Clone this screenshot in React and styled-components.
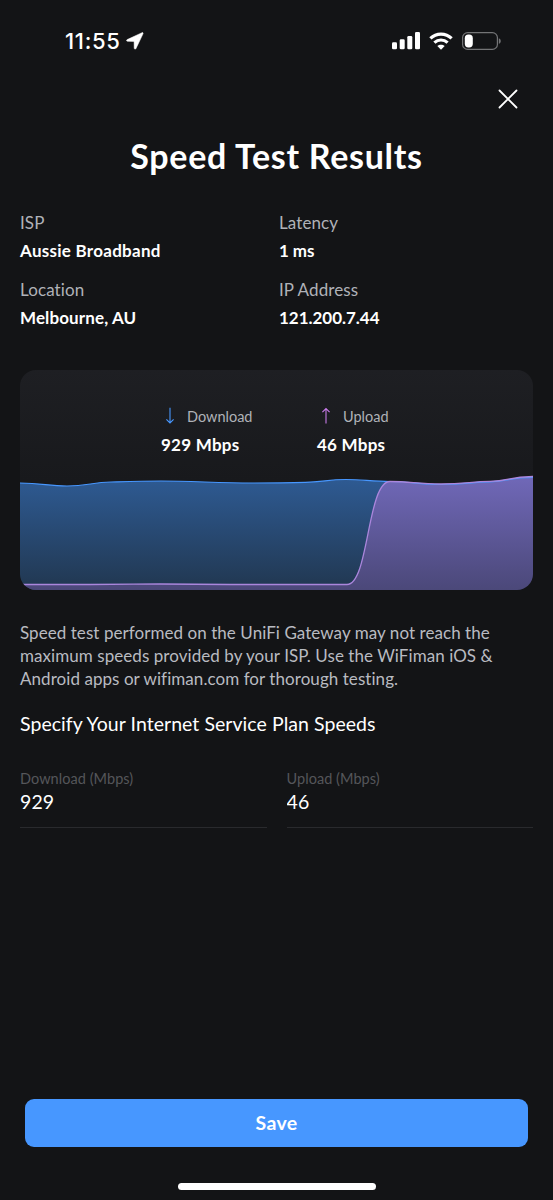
import React, { useState } from 'react';
import styled, { createGlobalStyle } from 'styled-components';

const details = [
    { label: 'ISP', value: 'Aussie Broadband', spacing: 0.27 },
    { label: 'Latency', value: '1 ms', spacing: -0.1 },
    { label: 'Location', value: 'Melbourne, AU', spacing: 0.12 },
    { label: 'IP Address', value: '121.200.7.44', spacing: -0.03 }
];

const App = () => {
    const [download, setDownload] = useState('929');
    const [upload, setUpload] = useState('46');

    return (
        <Screen>
            <GlobalStyle />
            <StatusBar>
                <Clock>11:55</Clock>
                <LocationIcon />
                <StatusIcons>
                    <SignalIcon />
                    <WifiIcon />
                    <BatteryIcon />
                </StatusIcons>
            </StatusBar>

            <TopBar>
                <CloseButton aria-label="Close">
                    <svg width="20" height="20" viewBox="0 0 20 20" fill="none" stroke="#fff" strokeWidth="1.8" strokeLinecap="round">
                        <path d="M1.500 1.500 L18.500 18.500 M18.500 1.500 L1.500 18.500" />
                    </svg>
                </CloseButton>
            </TopBar>

            <Title>Speed Test Results</Title>

            <Details>
                {details.map(({ label, value, spacing }) => (
                    <div key={label}>
                        <DetailLabel>{label}</DetailLabel>
                        <DetailValue $spacing={spacing}>{value}</DetailValue>
                    </div>
                ))}
            </Details>

            <Card>
                <Stats>
                    <Stat>
                        <StatLabel>
                            <svg width="10" height="18" viewBox="0 0 10 18" fill="none" stroke="#4797ff" strokeWidth="1.1">
                                <path d="M5 .7 V16 M1.400 12.300 L5 16 L8.600 12.300" />
                            </svg>
                            Download
                        </StatLabel>
                        <StatValue>929 Mbps</StatValue>
                    </Stat>
                    <Stat>
                        <StatLabel>
                            <svg width="10" height="18" viewBox="0 0 10 18" fill="none" stroke="#c77be8" strokeWidth="1.1">
                                <path d="M5 16.500 V1.500 M1.400 5.200 L5 1.500 L8.600 5.200" />
                            </svg>
                            Upload
                        </StatLabel>
                        <StatValue>46 Mbps</StatValue>
                    </Stat>
                </Stats>
                <SpeedChart />
            </Card>

            <Note>
                Speed test performed on the UniFi Gateway may not reach the<br />
                maximum speeds provided by your ISP. Use the WiFiman iOS &amp;<br />
                Android apps or wifiman.com for thorough testing.
            </Note>

            <Subtitle>Specify Your Internet Service Plan Speeds</Subtitle>

            <Fields>
                <Field>
                    <FieldLabel>Download (Mbps)</FieldLabel>
                    <FieldInput value={download} onChange={(e) => setDownload(e.target.value)} />
                </Field>
                <Field>
                    <FieldLabel>Upload (Mbps)</FieldLabel>
                    <FieldInput value={upload} onChange={(e) => setUpload(e.target.value)} />
                </Field>
            </Fields>

            <Footer>
                <SaveButton>Save</SaveButton>
                <HomeIndicator />
            </Footer>
        </Screen>
    );
};

const LocationIcon = () => (
    <svg width="18" height="18" viewBox="0 0 18 18" fill="#fff">
        <path d="M16 .7 L1.200 7.600 C.2 8.100 .4 9.300 1.500 9.300 L8.100 9.400 L8.200 16.100 C8.200 17.300 9.500 17.500 10 16.500 L17 1.800 C17.400 .9 16.800 .4 16 .7 Z" stroke="#fff" strokeWidth=".5" />
    </svg>
);

const SignalIcon = () => (
    <svg width="28" height="18" viewBox="0 0 28 18" fill="#fff">
        <rect x="0" y="10.2" width="5" height="7" rx="1.3" />
        <rect x="7.7" y="7.2" width="5" height="10" rx="1.3" />
        <rect x="15.3" y="4" width="5" height="13.2" rx="1.3" />
        <rect x="23" y="0" width="5" height="17.2" rx="1.3" />
    </svg>
);

const WifiIcon = () => (
    <svg width="24" height="18" viewBox="0 0 24 18" fill="none" stroke="#fff" strokeWidth="3.2">
        <path d="M1.400 6.400 C7.300 .6 16.700 .6 22.600 6.400" />
        <path d="M5.400 10.600 C9.200 7.100 14.800 7.100 18.600 10.600" />
        <path d="M12 17.800 L8.300 14.100 C10.400 12.200 13.600 12.200 15.700 14.100 Z" fill="#fff" stroke="none" />
    </svg>
);

const BatteryIcon = () => (
    <svg width="40" height="18" viewBox="0 0 40 18">
        <rect x=".6" y=".6" width="34.8" height="16.8" rx="5" fill="none" stroke="#737476" strokeWidth="1.2" />
        <rect x="2.8" y="2.6" width="8" height="12.8" rx="3.6" fill="#fff" />
        <path d="M36.800 6.200 C39.400 7 39.400 11 36.800 11.800 Z" fill="#737476" />
    </svg>
);

// 다운로드와 업로드 속도 그래프
const SpeedChart = () => (
    <Chart viewBox="0 0 513 116" fill="none">
        <defs>
            <linearGradient id="downloadFill" x1="0" y1="0" x2="0" y2="1">
                <stop offset="0" stopColor="#2e5a92" />
                <stop offset="1" stopColor="#213750" />
            </linearGradient>
            <linearGradient id="uploadFill" x1="0" y1="0" x2="0" y2="1">
                <stop offset="0" stopColor="#7068b8" />
                <stop offset="1" stopColor="#4b4879" />
            </linearGradient>
        </defs>
        <path
            d="M0 9 C22 9 28 12 47 12 C67 12 72 8.500 91 8 C108 7.500 122 7 141 7 C170 7 200 9 231 9 C252 9 272 9 290 8.200 C305 7.500 309 5.500 326 5.500 C342 5.500 352 7.500 370 7.500 L370 116 L0 116 Z"
            fill="url(#downloadFill)"
        />
        <path
            d="M0 110.500 L70 110.500 C100 110.500 115 110 140 110 C170 110 180 110.500 210 110.500 L327 110.500 C349 110.500 347 7.800 370 7.800 C390 7.800 398 10.500 421 10.500 C445 10.500 451 8 470 7.800 C490 7.500 488 3 513 3 L513 116 L0 116 Z"
            fill="url(#uploadFill)"
        />
        <path
            d="M0 9 C22 9 28 12 47 12 C67 12 72 8.500 91 8 C108 7.500 122 7 141 7 C170 7 200 9 231 9 C252 9 272 9 290 8.200 C305 7.500 309 5.500 326 5.500 C342 5.500 352 7.500 370 7.500 C390 7.500 398 10.500 421 10.500 C445 10.500 451 8 470 7.800 C490 7.500 488 3.300 513 3.300"
            stroke="#4797ff"
            strokeWidth="1.2"
        />
        <path
            d="M0 110.500 L70 110.500 C100 110.500 115 110 140 110 C170 110 180 110.500 210 110.500 L327 110.500 C349 110.500 347 7.500 370 7.500 C390 7.500 398 10 421 10 C445 10 451 7.500 470 7.300 C490 7 488 2.500 513 2.500"
            stroke="#aa86dc"
            strokeWidth="1.3"
        />
    </Chart>
);

const GlobalStyle = createGlobalStyle`
    body {
        margin: 0;
        background-color: #131416;
        font-family: Lato, 'Liberation Sans', sans-serif;
    }
`;

const Screen = styled.div`
    display: flex;
    flex-direction: column;
    box-sizing: border-box;
    width: 553px;
    height: 1200px;
    padding: 0 20px;
    overflow: hidden;
    background-color: #131416;
    color: #fff;
`;

// 상단 상태 표시줄
const StatusBar = styled.div`
    display: flex;
    align-items: center;
    flex: none;
    height: 82px;
    padding: 0 31px 0 45px;
    gap: 5px;
`;

const Clock = styled.span`
    font-family: Inter, 'Liberation Sans', sans-serif;
    font-size: 22px;
    font-weight: 500;
    line-height: 26px;
    letter-spacing: 0.7px;
`;

const StatusIcons = styled.div`
    display: flex;
    align-items: center;
    gap: 9px;
    margin-left: auto;
`;

const TopBar = styled.div`
    display: flex;
    justify-content: flex-end;
    flex: none;
    height: 34px;
    padding: 7px 15.5px 0 0;
`;

const CloseButton = styled.button`
    display: flex;
    width: 20px;
    height: 20px;
    padding: 0;
    border: none;
    background: none;
`;

const Title = styled.h1`
    flex: none;
    margin: 12px 0 34px;
    font-size: 34px;
    font-weight: 700;
    line-height: 42px;
    letter-spacing: 0.7px;
    text-align: center;
    white-space: nowrap;
`;

const Details = styled.div`
    display: grid;
    grid-template-columns: 259px 1fr;
    grid-auto-rows: 67px;
    flex: none;
    height: 158.5px;
`;

const DetailLabel = styled.div`
    font-size: 17px;
    line-height: 24px;
    letter-spacing: 0.1px;
    color: #b0b2b8;
`;

const DetailValue = styled.div`
    margin-top: 4px;
    font-size: 17px;
    font-weight: 700;
    line-height: 24px;
    letter-spacing: ${(props) => props.$spacing}px;
`;

// 그래프가 들어가는 카드
const Card = styled.div`
    display: flex;
    flex-direction: column;
    justify-content: space-between;
    flex: none;
    height: 220px;
    border-radius: 16px;
    overflow: hidden;
    background: linear-gradient(#1e1f23, #18191c 50%, #131416);
`;

const Stats = styled.div`
    display: grid;
    grid-template-columns: 156px auto;
    padding: 35.5px 0 0 141px;
`;

const Stat = styled.div`
    display: flex;
    flex-direction: column;
`;

const StatLabel = styled.div`
    display: flex;
    align-items: center;
    gap: 12px;
    height: 22px;
    padding-left: 4px;
    font-size: 14.5px;
    color: #b0b2b8;
`;

const StatValue = styled.div`
    margin-top: 6px;
    font-size: 17px;
    font-weight: 700;
    line-height: 24px;
    letter-spacing: 0.25px;
`;

const Chart = styled.svg`
    display: block;
    width: 513px;
    height: 116px;
`;

const Note = styled.p`
    flex: none;
    margin: 31px 0 0;
    font-size: 17px;
    line-height: 23.4px;
    letter-spacing: 0.06px;
    white-space: nowrap;
    color: #b9bbc1;
`;

const Subtitle = styled.h2`
    flex: none;
    margin: 20px 0 0;
    font-size: 19.5px;
    font-weight: 400;
    line-height: 26px;
    letter-spacing: 0.05px;
    white-space: nowrap;
`;

const Fields = styled.div`
    display: grid;
    grid-template-columns: 1fr 1fr;
    gap: 20px;
    margin-top: 32px;
`;

const Field = styled.label`
    display: flex;
    flex-direction: column;
    height: 58px;
    border-bottom: 1px solid #292a2d;
`;

const FieldLabel = styled.span`
    font-size: 14.5px;
    line-height: 20px;
    letter-spacing: 0.05px;
    color: #55565a;
`;

const FieldInput = styled.input`
    width: 100%;
    height: 26px;
    padding: 0;
    border: none;
    outline: none;
    background: none;
    color: #fff;
    font-family: inherit;
    font-size: 19.5px;
    letter-spacing: 0.1px;
`;

const Footer = styled.div`
    display: flex;
    flex-direction: column;
    align-items: center;
    gap: 36px;
    margin-top: auto;
    padding: 0 5px 10px;
`;

const SaveButton = styled.button`
    width: 100%;
    height: 48px;
    padding: 0 0 2px;
    border: none;
    border-radius: 9px;
    background-color: #4797ff;
    color: #fff;
    font-family: inherit;
    font-size: 19.5px;
    font-weight: 700;
    letter-spacing: 0.3px;
`;

const HomeIndicator = styled.div`
    width: 198px;
    height: 7px;
    border-radius: 4px;
    background-color: #fff;
`;

export default App;
